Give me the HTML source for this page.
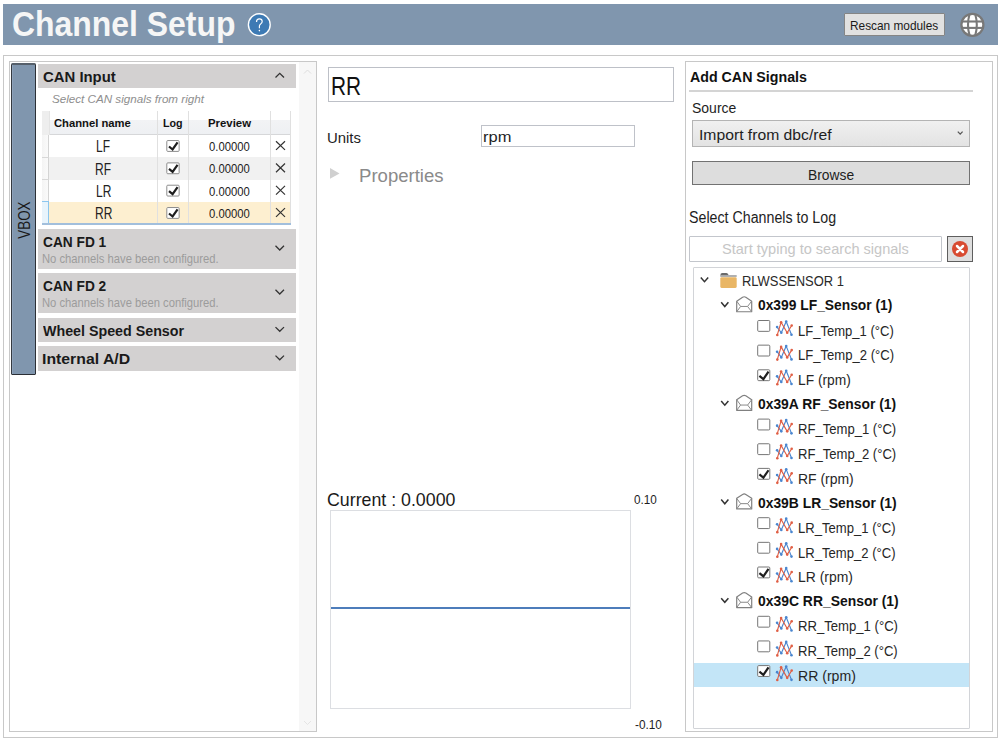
<!DOCTYPE html>
<html><head><meta charset="utf-8">
<style>
*{box-sizing:border-box;margin:0;padding:0}
html,body{width:1000px;height:741px;overflow:hidden;background:#fff;font-family:"Liberation Sans",sans-serif;color:#1e1e1e}
.a{position:absolute}
.t{position:absolute;white-space:nowrap}
svg{position:absolute;overflow:visible}
</style></head><body>
<div class="a" style="left:3px;top:4px;width:995px;height:41px;background:#8096ae"></div>
<svg style="left:0;top:0" width="1000" height="50"><circle cx="259.3" cy="24.7" r="10.9" fill="#3d7ab4" stroke="#fff" stroke-width="1.4"/><path d="M256.5,21.9 C256.5,19.9 257.9,18.9 259.4,18.9 C261,18.9 262.2,20 262.2,21.5 C262.2,23.7 259.4,24.1 259.4,26.1 V28.3" fill="none" stroke="#fff" stroke-width="1.15"/><circle cx="259.4" cy="30.6" r="0.8" fill="#fff"/></svg>
<div class="a" style="left:844px;top:13px;width:100.5px;height:23px;background:#e1e1e1;border:1px solid #858585;border-radius:1px"></div>
<svg style="left:0;top:0" width="1000" height="50"><circle cx="972.4" cy="24.8" r="11" fill="#fff" stroke="#787878" stroke-width="2.3"/><line x1="961" y1="21.5" x2="984" y2="21.5" stroke="#787878" stroke-width="2.1"/><line x1="961" y1="27.9" x2="984" y2="27.9" stroke="#787878" stroke-width="2.1"/><path d="M969.6,14 Q966.4,24.8 969.6,35.6 M975.2,14 Q978.4,24.8 975.2,35.6" fill="none" stroke="#787878" stroke-width="2.1"/></svg>
<div class="a" style="left:3px;top:55px;width:995px;height:683px;border:1px solid #c8c8c8"></div>
<div class="a" style="left:9px;top:61px;width:308px;height:671px;border:1px solid #c8c8c8"></div>
<div class="a" style="left:299px;top:62px;width:17px;height:669px;background:#f7f7f7"></div>
<svg style="left:0;top:0" width="1000" height="741"><polyline points="304,73.5 307.5,70 311,73.5" fill="none" stroke="#dedede" stroke-width="1"/><polyline points="304,721 307.5,724.5 311,721" fill="none" stroke="#e4e4e4" stroke-width="1"/></svg>
<div class="a" style="left:11px;top:63px;width:25px;height:312px;background:#8096ae;border:1px solid #353a41;border-top:2px solid #56606b;border-right-color:#2c3036;border-bottom-color:#2a2e35;border-radius:1.5px;box-shadow:inset 1px 0 0 #8ea2ba"></div>
<div class="a" style="left:38px;top:64px;width:258px;height:24px;background:#d3d1d1"></div>
<div class="a" style="left:38px;top:229px;width:258px;height:40px;background:#d3d1d1"></div>
<div class="a" style="left:38px;top:273px;width:258px;height:40px;background:#d3d1d1"></div>
<div class="a" style="left:38px;top:318px;width:258px;height:24px;background:#d3d1d1"></div>
<div class="a" style="left:38px;top:346px;width:258px;height:25px;background:#d3d1d1"></div>
<svg style="left:0;top:0" width="1000" height="741"><polyline points="275.5,77.5 279.75,73.3 284,77.5" fill="none" stroke="#333" stroke-width="1.3"/><polyline points="275.5,245.8 279.75,250.0 284,245.8" fill="none" stroke="#333" stroke-width="1.3"/><polyline points="275.5,289.79999999999995 279.75,294.0 284,289.79999999999995" fill="none" stroke="#333" stroke-width="1.3"/><polyline points="275.5,327.09999999999997 279.75,331.3 284,327.09999999999997" fill="none" stroke="#333" stroke-width="1.3"/><polyline points="275.5,355.59999999999997 279.75,359.8 284,355.59999999999997" fill="none" stroke="#333" stroke-width="1.3"/></svg>
<div class="a" style="left:42px;top:111px;width:249px;height:24px;background:linear-gradient(#ffffff 0,#ffffff 40%,#f2f3f5 40%,#eef0f3 100%);border-bottom:1px solid #d6d7d9"></div>
<div class="a" style="left:42px;top:111px;width:7px;height:24px;background:#eeeeee"></div>
<div class="a" style="left:42px;top:135px;width:7px;height:89px;background:linear-gradient(to right,#f4f4f4,#fbfbfb)"></div>
<div class="a" style="left:42px;top:202px;width:7px;height:22px;background:#e8f4fc"></div>
<div class="a" style="left:49px;top:135.0px;width:242px;height:22.33px;background:#ffffff"></div>
<div class="a" style="left:49px;top:157.33px;width:242px;height:22.33px;background:#f1f1f1"></div>
<div class="a" style="left:49px;top:179.66px;width:242px;height:22.33px;background:#ffffff"></div>
<div class="a" style="left:49px;top:201.99px;width:242px;height:22.33px;background:#fdefd0"></div>
<div class="a" style="left:157px;top:111px;width:1px;height:113px;background:#e0e0e0"></div>
<div class="a" style="left:188px;top:111px;width:1px;height:113px;background:#e0e0e0"></div>
<div class="a" style="left:270px;top:111px;width:1px;height:113px;background:#e0e0e0"></div>
<div class="a" style="left:290px;top:111px;width:1px;height:113px;background:#e0e0e0"></div>
<div class="a" style="left:49px;top:111px;width:1px;height:24px;background:#e4e4e4"></div>
<div class="a" style="left:48px;top:135px;width:1px;height:67px;background:#d4d4d4"></div>
<div class="a" style="left:42px;top:157px;width:7px;height:1px;background:#d8d8d8"></div>
<div class="a" style="left:42px;top:179px;width:7px;height:1px;background:#d8d8d8"></div>
<div class="a" style="left:42px;top:201px;width:7px;height:1px;background:#8cc6ee"></div>
<div class="a" style="left:48px;top:202px;width:1px;height:22px;background:#8cc6ee"></div>
<div class="a" style="left:42px;top:223.4px;width:249px;height:1.2px;background:#a2bfdc"></div>
<svg style="left:0;top:0" width="1000" height="741"><rect x="166.8" y="140.55" width="12.35" height="10.85" rx="1" fill="#fff" stroke="#8c8c8c" stroke-width="1"/><polyline points="169,146.50 172.6,149.50 177.55,142.45" fill="none" stroke="#1e1e1e" stroke-width="2.2"/><path d="M276,141.20 L285,149.90 M285,141.20 L276,149.90" stroke="#333" stroke-width="1.2"/><rect x="166.8" y="162.88" width="12.35" height="10.85" rx="1" fill="#fff" stroke="#8c8c8c" stroke-width="1"/><polyline points="169,168.83 172.6,171.83 177.55,164.78" fill="none" stroke="#1e1e1e" stroke-width="2.2"/><path d="M276,163.53 L285,172.23 M285,163.53 L276,172.23" stroke="#333" stroke-width="1.2"/><rect x="166.8" y="185.21" width="12.35" height="10.85" rx="1" fill="#fff" stroke="#8c8c8c" stroke-width="1"/><polyline points="169,191.16 172.6,194.16 177.55,187.11" fill="none" stroke="#1e1e1e" stroke-width="2.2"/><path d="M276,185.86 L285,194.56 M285,185.86 L276,194.56" stroke="#333" stroke-width="1.2"/><rect x="166.8" y="207.54" width="12.35" height="10.85" rx="1" fill="#fff" stroke="#8c8c8c" stroke-width="1"/><polyline points="169,213.49 172.6,216.49 177.55,209.44" fill="none" stroke="#1e1e1e" stroke-width="2.2"/><path d="M276,208.19 L285,216.89 M285,208.19 L276,216.89" stroke="#333" stroke-width="1.2"/></svg>
<div class="a" style="left:328px;top:67px;width:346px;height:35px;border:1px solid #bdc0c7"></div>
<div class="a" style="left:481px;top:125px;width:154px;height:22px;border:1px solid #bfc2c9"></div>
<svg style="left:0;top:0" width="1000" height="741"><polygon points="330,168 339.5,173.4 330,178.8" fill="#d0d0d0"/></svg>
<div class="a" style="left:330px;top:509.5px;width:301px;height:199px;border:1.6px solid #dcdee2"></div>
<div class="a" style="left:331px;top:606.8px;width:299px;height:2.2px;background:#4d7dbb"></div>
<div class="a" style="left:685px;top:61px;width:308px;height:671px;border:1px solid #c8c8c8"></div>
<div class="a" style="left:689px;top:90px;width:284px;height:2px;background:#d4d4d4"></div>
<div class="a" style="left:692px;top:120px;width:278px;height:27px;background:linear-gradient(#f0f0f0,#e3e3e3);border:1px solid #b4b4b4"></div>
<svg style="left:0;top:0" width="1000" height="741"><polyline points="957.8,131.6 960.2,134.2 962.6,131.6" fill="none" stroke="#555" stroke-width="1.25"/></svg>
<div class="a" style="left:692px;top:161px;width:278px;height:24px;background:#dddddd;border:1px solid #727272"></div>
<div class="a" style="left:689px;top:236px;width:253px;height:26px;border:1px solid #c3c6cc;border-radius:1px"></div>
<div class="a" style="left:947px;top:236px;width:26px;height:26px;background:#dedede;border:1px solid #5e5e5e"></div>
<svg style="left:0;top:0" width="1000" height="741"><circle cx="960" cy="249" r="8" fill="#d84b31"/><path d="M957,246 L963,252 M963,246 L957,252" stroke="#fff" stroke-width="2.5" stroke-linecap="round"/></svg>
<div class="a" style="left:693px;top:267px;width:277px;height:462px;border:1px solid #d2d4d8;border-radius:1px"></div>
<div class="a" style="left:694px;top:662.8px;width:275px;height:24.3px;background:#c3e5f7"></div>
<svg style="left:0;top:0" width="1000" height="741"><polyline points="700.8,277.60 704.5,281.70 708.2,277.60" fill="none" stroke="#333" stroke-width="1.5"/><path d="M720.3,275.50 q0,-2.4 2,-2.4 h4 q1.2,0 1.8,1.2 l0.5,1.2 z" fill="#6a6a6a"/><rect x="720.3" y="275.10" width="16.4" height="1.8" fill="#a8a8a8"/><rect x="720.3" y="277.30" width="16.4" height="10.6" rx="1.3" fill="#e9b665"/><polyline points="721.2,302.35 724.8,306.55 728.4,302.35" fill="none" stroke="#333" stroke-width="1.5"/><path d="M736.7,301.15 L742.6,297.25 Q744.2,296.25 745.8,297.25 L751.7,301.15 V311.75 H736.7 Z" fill="none" stroke="#808080" stroke-width="1.2" stroke-linejoin="round"/><path d="M736.7,301.15 L740.6,306.45 H747.6 L751.7,301.15 M736.7,311.75 L740.6,306.45 M751.7,311.75 L747.6,306.45" fill="none" stroke="#8a8a8a" stroke-width="1"/><rect x="757.7" y="320.50" width="12.1" height="10.85" rx="1" fill="#fff" stroke="#767676" stroke-width="1"/><polyline points="777.1,327.05 781.3,332.75 786.2,321.45 791.5,334.75" fill="none" stroke="#4a86cf" stroke-width="1.15" stroke-linejoin="round"/><circle cx="777.1" cy="327.05" r="1.3" fill="#4a86cf"/><circle cx="781.3" cy="332.75" r="1.3" fill="#4a86cf"/><circle cx="786.2" cy="321.45" r="1.3" fill="#4a86cf"/><circle cx="791.5" cy="334.75" r="1.3" fill="#4a86cf"/><polyline points="777.3,334.95 781.1,322.25 787.2,332.75 791.7,325.45" fill="none" stroke="#e05f45" stroke-width="1.15" stroke-linejoin="round"/><circle cx="777.3" cy="334.95" r="1.3" fill="#e05f45"/><circle cx="781.1" cy="322.25" r="1.3" fill="#e05f45"/><circle cx="787.2" cy="332.75" r="1.3" fill="#e05f45"/><circle cx="791.7" cy="325.45" r="1.3" fill="#e05f45"/><rect x="757.7" y="345.15" width="12.1" height="10.85" rx="1" fill="#fff" stroke="#767676" stroke-width="1"/><polyline points="777.1,351.70 781.3,357.40 786.2,346.10 791.5,359.40" fill="none" stroke="#4a86cf" stroke-width="1.15" stroke-linejoin="round"/><circle cx="777.1" cy="351.70" r="1.3" fill="#4a86cf"/><circle cx="781.3" cy="357.40" r="1.3" fill="#4a86cf"/><circle cx="786.2" cy="346.10" r="1.3" fill="#4a86cf"/><circle cx="791.5" cy="359.40" r="1.3" fill="#4a86cf"/><polyline points="777.3,359.60 781.1,346.90 787.2,357.40 791.7,350.10" fill="none" stroke="#e05f45" stroke-width="1.15" stroke-linejoin="round"/><circle cx="777.3" cy="359.60" r="1.3" fill="#e05f45"/><circle cx="781.1" cy="346.90" r="1.3" fill="#e05f45"/><circle cx="787.2" cy="357.40" r="1.3" fill="#e05f45"/><circle cx="791.7" cy="350.10" r="1.3" fill="#e05f45"/><rect x="757.7" y="369.80" width="12.1" height="10.85" rx="1" fill="#fff" stroke="#767676" stroke-width="1"/><polyline points="759.4,375.85 763.4,379.10 768.5,371.65" fill="none" stroke="#1e1e1e" stroke-width="2.2"/><polyline points="777.1,376.35 781.3,382.05 786.2,370.75 791.5,384.05" fill="none" stroke="#4a86cf" stroke-width="1.15" stroke-linejoin="round"/><circle cx="777.1" cy="376.35" r="1.3" fill="#4a86cf"/><circle cx="781.3" cy="382.05" r="1.3" fill="#4a86cf"/><circle cx="786.2" cy="370.75" r="1.3" fill="#4a86cf"/><circle cx="791.5" cy="384.05" r="1.3" fill="#4a86cf"/><polyline points="777.3,384.25 781.1,371.55 787.2,382.05 791.7,374.75" fill="none" stroke="#e05f45" stroke-width="1.15" stroke-linejoin="round"/><circle cx="777.3" cy="384.25" r="1.3" fill="#e05f45"/><circle cx="781.1" cy="371.55" r="1.3" fill="#e05f45"/><circle cx="787.2" cy="382.05" r="1.3" fill="#e05f45"/><circle cx="791.7" cy="374.75" r="1.3" fill="#e05f45"/><polyline points="721.2,400.95 724.8,405.15 728.4,400.95" fill="none" stroke="#333" stroke-width="1.5"/><path d="M736.7,399.75 L742.6,395.85 Q744.2,394.85 745.8,395.85 L751.7,399.75 V410.35 H736.7 Z" fill="none" stroke="#808080" stroke-width="1.2" stroke-linejoin="round"/><path d="M736.7,399.75 L740.6,405.05 H747.6 L751.7,399.75 M736.7,410.35 L740.6,405.05 M751.7,410.35 L747.6,405.05" fill="none" stroke="#8a8a8a" stroke-width="1"/><rect x="757.7" y="419.10" width="12.1" height="10.85" rx="1" fill="#fff" stroke="#767676" stroke-width="1"/><polyline points="777.1,425.65 781.3,431.35 786.2,420.05 791.5,433.35" fill="none" stroke="#4a86cf" stroke-width="1.15" stroke-linejoin="round"/><circle cx="777.1" cy="425.65" r="1.3" fill="#4a86cf"/><circle cx="781.3" cy="431.35" r="1.3" fill="#4a86cf"/><circle cx="786.2" cy="420.05" r="1.3" fill="#4a86cf"/><circle cx="791.5" cy="433.35" r="1.3" fill="#4a86cf"/><polyline points="777.3,433.55 781.1,420.85 787.2,431.35 791.7,424.05" fill="none" stroke="#e05f45" stroke-width="1.15" stroke-linejoin="round"/><circle cx="777.3" cy="433.55" r="1.3" fill="#e05f45"/><circle cx="781.1" cy="420.85" r="1.3" fill="#e05f45"/><circle cx="787.2" cy="431.35" r="1.3" fill="#e05f45"/><circle cx="791.7" cy="424.05" r="1.3" fill="#e05f45"/><rect x="757.7" y="443.75" width="12.1" height="10.85" rx="1" fill="#fff" stroke="#767676" stroke-width="1"/><polyline points="777.1,450.30 781.3,456.00 786.2,444.70 791.5,458.00" fill="none" stroke="#4a86cf" stroke-width="1.15" stroke-linejoin="round"/><circle cx="777.1" cy="450.30" r="1.3" fill="#4a86cf"/><circle cx="781.3" cy="456.00" r="1.3" fill="#4a86cf"/><circle cx="786.2" cy="444.70" r="1.3" fill="#4a86cf"/><circle cx="791.5" cy="458.00" r="1.3" fill="#4a86cf"/><polyline points="777.3,458.20 781.1,445.50 787.2,456.00 791.7,448.70" fill="none" stroke="#e05f45" stroke-width="1.15" stroke-linejoin="round"/><circle cx="777.3" cy="458.20" r="1.3" fill="#e05f45"/><circle cx="781.1" cy="445.50" r="1.3" fill="#e05f45"/><circle cx="787.2" cy="456.00" r="1.3" fill="#e05f45"/><circle cx="791.7" cy="448.70" r="1.3" fill="#e05f45"/><rect x="757.7" y="468.40" width="12.1" height="10.85" rx="1" fill="#fff" stroke="#767676" stroke-width="1"/><polyline points="759.4,474.45 763.4,477.70 768.5,470.25" fill="none" stroke="#1e1e1e" stroke-width="2.2"/><polyline points="777.1,474.95 781.3,480.65 786.2,469.35 791.5,482.65" fill="none" stroke="#4a86cf" stroke-width="1.15" stroke-linejoin="round"/><circle cx="777.1" cy="474.95" r="1.3" fill="#4a86cf"/><circle cx="781.3" cy="480.65" r="1.3" fill="#4a86cf"/><circle cx="786.2" cy="469.35" r="1.3" fill="#4a86cf"/><circle cx="791.5" cy="482.65" r="1.3" fill="#4a86cf"/><polyline points="777.3,482.85 781.1,470.15 787.2,480.65 791.7,473.35" fill="none" stroke="#e05f45" stroke-width="1.15" stroke-linejoin="round"/><circle cx="777.3" cy="482.85" r="1.3" fill="#e05f45"/><circle cx="781.1" cy="470.15" r="1.3" fill="#e05f45"/><circle cx="787.2" cy="480.65" r="1.3" fill="#e05f45"/><circle cx="791.7" cy="473.35" r="1.3" fill="#e05f45"/><polyline points="721.2,499.55 724.8,503.75 728.4,499.55" fill="none" stroke="#333" stroke-width="1.5"/><path d="M736.7,498.35 L742.6,494.45 Q744.2,493.45 745.8,494.45 L751.7,498.35 V508.95 H736.7 Z" fill="none" stroke="#808080" stroke-width="1.2" stroke-linejoin="round"/><path d="M736.7,498.35 L740.6,503.65 H747.6 L751.7,498.35 M736.7,508.95 L740.6,503.65 M751.7,508.95 L747.6,503.65" fill="none" stroke="#8a8a8a" stroke-width="1"/><rect x="757.7" y="517.70" width="12.1" height="10.85" rx="1" fill="#fff" stroke="#767676" stroke-width="1"/><polyline points="777.1,524.25 781.3,529.95 786.2,518.65 791.5,531.95" fill="none" stroke="#4a86cf" stroke-width="1.15" stroke-linejoin="round"/><circle cx="777.1" cy="524.25" r="1.3" fill="#4a86cf"/><circle cx="781.3" cy="529.95" r="1.3" fill="#4a86cf"/><circle cx="786.2" cy="518.65" r="1.3" fill="#4a86cf"/><circle cx="791.5" cy="531.95" r="1.3" fill="#4a86cf"/><polyline points="777.3,532.15 781.1,519.45 787.2,529.95 791.7,522.65" fill="none" stroke="#e05f45" stroke-width="1.15" stroke-linejoin="round"/><circle cx="777.3" cy="532.15" r="1.3" fill="#e05f45"/><circle cx="781.1" cy="519.45" r="1.3" fill="#e05f45"/><circle cx="787.2" cy="529.95" r="1.3" fill="#e05f45"/><circle cx="791.7" cy="522.65" r="1.3" fill="#e05f45"/><rect x="757.7" y="542.35" width="12.1" height="10.85" rx="1" fill="#fff" stroke="#767676" stroke-width="1"/><polyline points="777.1,548.90 781.3,554.60 786.2,543.30 791.5,556.60" fill="none" stroke="#4a86cf" stroke-width="1.15" stroke-linejoin="round"/><circle cx="777.1" cy="548.90" r="1.3" fill="#4a86cf"/><circle cx="781.3" cy="554.60" r="1.3" fill="#4a86cf"/><circle cx="786.2" cy="543.30" r="1.3" fill="#4a86cf"/><circle cx="791.5" cy="556.60" r="1.3" fill="#4a86cf"/><polyline points="777.3,556.80 781.1,544.10 787.2,554.60 791.7,547.30" fill="none" stroke="#e05f45" stroke-width="1.15" stroke-linejoin="round"/><circle cx="777.3" cy="556.80" r="1.3" fill="#e05f45"/><circle cx="781.1" cy="544.10" r="1.3" fill="#e05f45"/><circle cx="787.2" cy="554.60" r="1.3" fill="#e05f45"/><circle cx="791.7" cy="547.30" r="1.3" fill="#e05f45"/><rect x="757.7" y="567.00" width="12.1" height="10.85" rx="1" fill="#fff" stroke="#767676" stroke-width="1"/><polyline points="759.4,573.05 763.4,576.30 768.5,568.85" fill="none" stroke="#1e1e1e" stroke-width="2.2"/><polyline points="777.1,573.55 781.3,579.25 786.2,567.95 791.5,581.25" fill="none" stroke="#4a86cf" stroke-width="1.15" stroke-linejoin="round"/><circle cx="777.1" cy="573.55" r="1.3" fill="#4a86cf"/><circle cx="781.3" cy="579.25" r="1.3" fill="#4a86cf"/><circle cx="786.2" cy="567.95" r="1.3" fill="#4a86cf"/><circle cx="791.5" cy="581.25" r="1.3" fill="#4a86cf"/><polyline points="777.3,581.45 781.1,568.75 787.2,579.25 791.7,571.95" fill="none" stroke="#e05f45" stroke-width="1.15" stroke-linejoin="round"/><circle cx="777.3" cy="581.45" r="1.3" fill="#e05f45"/><circle cx="781.1" cy="568.75" r="1.3" fill="#e05f45"/><circle cx="787.2" cy="579.25" r="1.3" fill="#e05f45"/><circle cx="791.7" cy="571.95" r="1.3" fill="#e05f45"/><polyline points="721.2,598.15 724.8,602.35 728.4,598.15" fill="none" stroke="#333" stroke-width="1.5"/><path d="M736.7,596.95 L742.6,593.05 Q744.2,592.05 745.8,593.05 L751.7,596.95 V607.55 H736.7 Z" fill="none" stroke="#808080" stroke-width="1.2" stroke-linejoin="round"/><path d="M736.7,596.95 L740.6,602.25 H747.6 L751.7,596.95 M736.7,607.55 L740.6,602.25 M751.7,607.55 L747.6,602.25" fill="none" stroke="#8a8a8a" stroke-width="1"/><rect x="757.7" y="616.30" width="12.1" height="10.85" rx="1" fill="#fff" stroke="#767676" stroke-width="1"/><polyline points="777.1,622.85 781.3,628.55 786.2,617.25 791.5,630.55" fill="none" stroke="#4a86cf" stroke-width="1.15" stroke-linejoin="round"/><circle cx="777.1" cy="622.85" r="1.3" fill="#4a86cf"/><circle cx="781.3" cy="628.55" r="1.3" fill="#4a86cf"/><circle cx="786.2" cy="617.25" r="1.3" fill="#4a86cf"/><circle cx="791.5" cy="630.55" r="1.3" fill="#4a86cf"/><polyline points="777.3,630.75 781.1,618.05 787.2,628.55 791.7,621.25" fill="none" stroke="#e05f45" stroke-width="1.15" stroke-linejoin="round"/><circle cx="777.3" cy="630.75" r="1.3" fill="#e05f45"/><circle cx="781.1" cy="618.05" r="1.3" fill="#e05f45"/><circle cx="787.2" cy="628.55" r="1.3" fill="#e05f45"/><circle cx="791.7" cy="621.25" r="1.3" fill="#e05f45"/><rect x="757.7" y="640.95" width="12.1" height="10.85" rx="1" fill="#fff" stroke="#767676" stroke-width="1"/><polyline points="777.1,647.50 781.3,653.20 786.2,641.90 791.5,655.20" fill="none" stroke="#4a86cf" stroke-width="1.15" stroke-linejoin="round"/><circle cx="777.1" cy="647.50" r="1.3" fill="#4a86cf"/><circle cx="781.3" cy="653.20" r="1.3" fill="#4a86cf"/><circle cx="786.2" cy="641.90" r="1.3" fill="#4a86cf"/><circle cx="791.5" cy="655.20" r="1.3" fill="#4a86cf"/><polyline points="777.3,655.40 781.1,642.70 787.2,653.20 791.7,645.90" fill="none" stroke="#e05f45" stroke-width="1.15" stroke-linejoin="round"/><circle cx="777.3" cy="655.40" r="1.3" fill="#e05f45"/><circle cx="781.1" cy="642.70" r="1.3" fill="#e05f45"/><circle cx="787.2" cy="653.20" r="1.3" fill="#e05f45"/><circle cx="791.7" cy="645.90" r="1.3" fill="#e05f45"/><rect x="757.7" y="665.60" width="12.1" height="10.85" rx="1" fill="#fff" stroke="#767676" stroke-width="1"/><polyline points="759.4,671.65 763.4,674.90 768.5,667.45" fill="none" stroke="#1e1e1e" stroke-width="2.2"/><polyline points="777.1,672.15 781.3,677.85 786.2,666.55 791.5,679.85" fill="none" stroke="#4a86cf" stroke-width="1.15" stroke-linejoin="round"/><circle cx="777.1" cy="672.15" r="1.3" fill="#4a86cf"/><circle cx="781.3" cy="677.85" r="1.3" fill="#4a86cf"/><circle cx="786.2" cy="666.55" r="1.3" fill="#4a86cf"/><circle cx="791.5" cy="679.85" r="1.3" fill="#4a86cf"/><polyline points="777.3,680.05 781.1,667.35 787.2,677.85 791.7,670.55" fill="none" stroke="#e05f45" stroke-width="1.15" stroke-linejoin="round"/><circle cx="777.3" cy="680.05" r="1.3" fill="#e05f45"/><circle cx="781.1" cy="667.35" r="1.3" fill="#e05f45"/><circle cx="787.2" cy="677.85" r="1.3" fill="#e05f45"/><circle cx="791.7" cy="670.55" r="1.3" fill="#e05f45"/></svg>
<div class="t" style="left:11.88px;top:6.91px;font-family:'Liberation Sans',sans-serif;font-size:34.593px;line-height:34.593px;font-weight:bold;font-style:normal;color:#f6f6f6;transform:scale(0.9233,1.0000);transform-origin:0 29.29px;">Channel Setup</div>
<div class="t" style="left:850.09px;top:19.29px;font-family:'Liberation Sans',sans-serif;font-size:13.000px;line-height:13.000px;font-weight:normal;font-style:normal;color:#1a1a1a;transform:scale(0.9115,1.0000);transform-origin:0 11.01px;">Rescan modules</div>
<div class="t" style="left:42.50px;top:69.10px;font-family:'Liberation Sans',sans-serif;font-size:15.116px;line-height:15.116px;font-weight:bold;font-style:normal;color:#1a1a1a;transform:scale(0.9851,1.0000);transform-origin:0 12.80px;">CAN Input</div>
<div class="t" style="left:52.40px;top:92.65px;font-family:'Liberation Sans',sans-serif;font-size:11.628px;line-height:11.628px;font-weight:normal;font-style:italic;color:#8e8e8e;transform:scale(1.0020,1.0000);transform-origin:0 9.85px;">Select CAN signals from right</div>
<div class="t" style="left:54.40px;top:118.18px;font-family:'Liberation Sans',sans-serif;font-size:11.483px;line-height:11.483px;font-weight:bold;font-style:normal;color:#111;transform:scale(0.9795,1.0000);transform-origin:0 9.72px;">Channel name</div>
<div class="t" style="left:162.70px;top:118.18px;font-family:'Liberation Sans',sans-serif;font-size:11.483px;line-height:11.483px;font-weight:bold;font-style:normal;color:#111;transform:scale(0.9333,1.0000);transform-origin:0 9.72px;">Log</div>
<div class="t" style="left:207.90px;top:118.18px;font-family:'Liberation Sans',sans-serif;font-size:11.483px;line-height:11.483px;font-weight:bold;font-style:normal;color:#111;transform:scale(0.9932,1.0000);transform-origin:0 9.72px;">Preview</div>
<div class="t" style="left:96.04px;top:139.41px;font-family:'Liberation Sans',sans-serif;font-size:15.698px;line-height:15.698px;font-weight:normal;font-style:normal;color:#222;transform:scale(0.7647,1.0000);transform-origin:0 13.29px;">LF</div>
<div class="t" style="left:208.90px;top:140.90px;font-family:'Liberation Sans',sans-serif;font-size:12.407px;line-height:12.407px;font-weight:normal;font-style:normal;color:#222;transform:scale(0.9111,1.0000);transform-origin:0 10.50px;">0.00000</div>
<div class="t" style="left:94.89px;top:161.74px;font-family:'Liberation Sans',sans-serif;font-size:15.698px;line-height:15.698px;font-weight:normal;font-style:normal;color:#222;transform:scale(0.7647,1.0000);transform-origin:0 13.29px;">RF</div>
<div class="t" style="left:208.90px;top:163.23px;font-family:'Liberation Sans',sans-serif;font-size:12.407px;line-height:12.407px;font-weight:normal;font-style:normal;color:#222;transform:scale(0.9111,1.0000);transform-origin:0 10.50px;">0.00000</div>
<div class="t" style="left:95.65px;top:184.07px;font-family:'Liberation Sans',sans-serif;font-size:15.698px;line-height:15.698px;font-weight:normal;font-style:normal;color:#222;transform:scale(0.7647,1.0000);transform-origin:0 13.29px;">LR</div>
<div class="t" style="left:208.90px;top:185.56px;font-family:'Liberation Sans',sans-serif;font-size:12.407px;line-height:12.407px;font-weight:normal;font-style:normal;color:#222;transform:scale(0.9111,1.0000);transform-origin:0 10.50px;">0.00000</div>
<div class="t" style="left:94.51px;top:206.40px;font-family:'Liberation Sans',sans-serif;font-size:15.698px;line-height:15.698px;font-weight:normal;font-style:normal;color:#222;transform:scale(0.7647,1.0000);transform-origin:0 13.29px;">RR</div>
<div class="t" style="left:208.90px;top:207.89px;font-family:'Liberation Sans',sans-serif;font-size:12.407px;line-height:12.407px;font-weight:normal;font-style:normal;color:#222;transform:scale(0.9111,1.0000);transform-origin:0 10.50px;">0.00000</div>
<div class="t" style="left:43.00px;top:234.03px;font-family:'Liberation Sans',sans-serif;font-size:15.552px;line-height:15.552px;font-weight:bold;font-style:normal;color:#1a1a1a;transform:scale(0.8819,1.0000);transform-origin:0 13.17px;">CAN FD 1</div>
<div class="t" style="left:41.96px;top:253.81px;font-family:'Liberation Sans',sans-serif;font-size:11.919px;line-height:11.919px;font-weight:normal;font-style:normal;color:#9c9c9c;transform:scale(0.9430,1.0000);transform-origin:0 10.09px;">No channels have been configured.</div>
<div class="t" style="left:43.00px;top:278.43px;font-family:'Liberation Sans',sans-serif;font-size:15.552px;line-height:15.552px;font-weight:bold;font-style:normal;color:#1a1a1a;transform:scale(0.8819,1.0000);transform-origin:0 13.17px;">CAN FD 2</div>
<div class="t" style="left:41.96px;top:298.11px;font-family:'Liberation Sans',sans-serif;font-size:11.919px;line-height:11.919px;font-weight:normal;font-style:normal;color:#9c9c9c;transform:scale(0.9430,1.0000);transform-origin:0 10.09px;">No channels have been configured.</div>
<div class="t" style="left:42.90px;top:322.98px;font-family:'Liberation Sans',sans-serif;font-size:15.262px;line-height:15.262px;font-weight:bold;font-style:normal;color:#1a1a1a;transform:scale(0.9351,1.0000);transform-origin:0 12.92px;">Wheel Speed Sensor</div>
<div class="t" style="left:41.88px;top:351.33px;font-family:'Liberation Sans',sans-serif;font-size:15.552px;line-height:15.552px;font-weight:bold;font-style:normal;color:#1a1a1a;transform:scale(1.0165,1.0000);transform-origin:0 13.17px;">Internal A/D</div>
<div class="t" style="left:29.70px;top:224.54px;font-family:'Liberation Sans',sans-serif;font-size:16.134px;line-height:16.134px;font-weight:normal;font-style:normal;color:#1a1a1a;transform:rotate(-90deg) scale(0.8289,1.0000);transform-origin:0 13.66px;">VBOX</div>
<div class="t" style="left:330.88px;top:73.62px;font-family:'Liberation Sans',sans-serif;font-size:25.727px;line-height:25.727px;font-weight:normal;font-style:normal;color:#111;transform:scale(0.8118,1.0000);transform-origin:0 21.78px;">RR</div>
<div class="t" style="left:326.52px;top:129.83px;font-family:'Liberation Sans',sans-serif;font-size:15.262px;line-height:15.262px;font-weight:normal;font-style:normal;color:#1e1e1e;transform:scale(0.9773,1.0000);transform-origin:0 12.92px;">Units</div>
<div class="t" style="left:483.29px;top:129.96px;font-family:'Liberation Sans',sans-serif;font-size:14.867px;line-height:14.867px;font-weight:normal;font-style:normal;color:#1e1e1e;transform:scale(1.1083,1.0000);transform-origin:0 12.59px;">rpm</div>
<div class="t" style="left:359.00px;top:166.71px;font-family:'Liberation Sans',sans-serif;font-size:18.532px;line-height:18.532px;font-weight:normal;font-style:normal;color:#8a8a8a;transform:scale(1.0024,1.0000);transform-origin:0 15.69px;">Properties</div>
<div class="t" style="left:326.83px;top:490.79px;font-family:'Liberation Sans',sans-serif;font-size:18.314px;line-height:18.314px;font-weight:normal;font-style:normal;color:#1a1a1a;transform:scale(0.9710,1.0000);transform-origin:0 15.51px;">Current : 0.0000</div>
<div class="t" style="left:634.10px;top:493.66px;font-family:'Liberation Sans',sans-serif;font-size:12.689px;line-height:12.689px;font-weight:normal;font-style:normal;color:#1e1e1e;transform:scale(0.9250,1.0000);transform-origin:0 10.74px;">0.10</div>
<div class="t" style="left:634.90px;top:718.78px;font-family:'Liberation Sans',sans-serif;font-size:12.548px;line-height:12.548px;font-weight:normal;font-style:normal;color:#1e1e1e;transform:scale(0.9429,1.0000);transform-origin:0 10.62px;">-0.10</div>
<div class="t" style="left:689.50px;top:68.83px;font-family:'Liberation Sans',sans-serif;font-size:15.552px;line-height:15.552px;font-weight:bold;font-style:normal;color:#111;transform:scale(0.9148,1.0000);transform-origin:0 13.17px;">Add CAN Signals</div>
<div class="t" style="left:692.07px;top:100.10px;font-family:'Liberation Sans',sans-serif;font-size:15.116px;line-height:15.116px;font-weight:normal;font-style:normal;color:#1e1e1e;transform:scale(0.9255,1.0000);transform-origin:0 12.80px;">Source</div>
<div class="t" style="left:698.59px;top:127.23px;font-family:'Liberation Sans',sans-serif;font-size:15.552px;line-height:15.552px;font-weight:normal;font-style:normal;color:#1e1e1e;transform:scale(1.0099,1.0000);transform-origin:0 13.17px;">Import from dbc/ref</div>
<div class="t" style="left:808.11px;top:166.93px;font-family:'Liberation Sans',sans-serif;font-size:15.552px;line-height:15.552px;font-weight:normal;font-style:normal;color:#1e1e1e;transform:scale(0.8902,1.0000);transform-origin:0 13.17px;">Browse</div>
<div class="t" style="left:688.80px;top:209.69px;font-family:'Liberation Sans',sans-serif;font-size:15.843px;line-height:15.843px;font-weight:normal;font-style:normal;color:#1e1e1e;transform:scale(0.8988,1.0000);transform-origin:0 13.41px;">Select Channels to Log</div>
<div class="t" style="left:721.74px;top:241.00px;font-family:'Liberation Sans',sans-serif;font-size:15.116px;line-height:15.116px;font-weight:normal;font-style:normal;color:#c6c6c6;transform:scale(0.9632,1.0000);transform-origin:0 12.80px;">Start typing to search signals</div>
<div class="t" style="left:741.79px;top:273.62px;font-family:'Liberation Sans',sans-serif;font-size:14.971px;line-height:14.971px;font-weight:normal;font-style:normal;color:#2a2a2a;transform:scale(0.8650,1.0000);transform-origin:0 12.68px;">RLWSSENSOR 1</div>
<div class="t" style="left:757.80px;top:298.40px;font-family:'Liberation Sans',sans-serif;font-size:14.826px;line-height:14.826px;font-weight:bold;font-style:normal;color:#111;transform:scale(0.9326,1.0000);transform-origin:0 12.55px;">0x399 LF_Sensor (1)</div>
<div class="t" style="left:797.65px;top:322.68px;font-family:'Liberation Sans',sans-serif;font-size:15.262px;line-height:15.262px;font-weight:normal;font-style:normal;color:#262626;transform:scale(0.8545,1.0000);transform-origin:0 12.92px;">LF_Temp_1 (°C)</div>
<div class="t" style="left:797.64px;top:347.33px;font-family:'Liberation Sans',sans-serif;font-size:15.262px;line-height:15.262px;font-weight:normal;font-style:normal;color:#262626;transform:scale(0.8573,1.0000);transform-origin:0 12.92px;">LF_Temp_2 (°C)</div>
<div class="t" style="left:797.60px;top:371.98px;font-family:'Liberation Sans',sans-serif;font-size:15.262px;line-height:15.262px;font-weight:normal;font-style:normal;color:#262626;transform:scale(0.9035,1.0000);transform-origin:0 12.92px;">LF (rpm)</div>
<div class="t" style="left:757.80px;top:397.00px;font-family:'Liberation Sans',sans-serif;font-size:14.826px;line-height:14.826px;font-weight:bold;font-style:normal;color:#111;transform:scale(0.9357,1.0000);transform-origin:0 12.55px;">0x39A RF_Sensor (1)</div>
<div class="t" style="left:797.64px;top:421.28px;font-family:'Liberation Sans',sans-serif;font-size:15.262px;line-height:15.262px;font-weight:normal;font-style:normal;color:#262626;transform:scale(0.8573,1.0000);transform-origin:0 12.92px;">RF_Temp_1 (°C)</div>
<div class="t" style="left:797.64px;top:445.93px;font-family:'Liberation Sans',sans-serif;font-size:15.262px;line-height:15.262px;font-weight:normal;font-style:normal;color:#262626;transform:scale(0.8573,1.0000);transform-origin:0 12.92px;">RF_Temp_2 (°C)</div>
<div class="t" style="left:797.59px;top:470.58px;font-family:'Liberation Sans',sans-serif;font-size:15.262px;line-height:15.262px;font-weight:normal;font-style:normal;color:#262626;transform:scale(0.9132,1.0000);transform-origin:0 12.92px;">RF (rpm)</div>
<div class="t" style="left:757.80px;top:495.60px;font-family:'Liberation Sans',sans-serif;font-size:14.826px;line-height:14.826px;font-weight:bold;font-style:normal;color:#111;transform:scale(0.9357,1.0000);transform-origin:0 12.55px;">0x39B LR_Sensor (1)</div>
<div class="t" style="left:797.64px;top:519.88px;font-family:'Liberation Sans',sans-serif;font-size:15.262px;line-height:15.262px;font-weight:normal;font-style:normal;color:#262626;transform:scale(0.8573,1.0000);transform-origin:0 12.92px;">LR_Temp_1 (°C)</div>
<div class="t" style="left:797.64px;top:544.53px;font-family:'Liberation Sans',sans-serif;font-size:15.262px;line-height:15.262px;font-weight:normal;font-style:normal;color:#262626;transform:scale(0.8573,1.0000);transform-origin:0 12.92px;">LR_Temp_2 (°C)</div>
<div class="t" style="left:797.59px;top:569.18px;font-family:'Liberation Sans',sans-serif;font-size:15.262px;line-height:15.262px;font-weight:normal;font-style:normal;color:#262626;transform:scale(0.9132,1.0000);transform-origin:0 12.92px;">LR (rpm)</div>
<div class="t" style="left:757.80px;top:594.20px;font-family:'Liberation Sans',sans-serif;font-size:14.826px;line-height:14.826px;font-weight:bold;font-style:normal;color:#111;transform:scale(0.9387,1.0000);transform-origin:0 12.55px;">0x39C RR_Sensor (1)</div>
<div class="t" style="left:797.64px;top:618.48px;font-family:'Liberation Sans',sans-serif;font-size:15.262px;line-height:15.262px;font-weight:normal;font-style:normal;color:#262626;transform:scale(0.8600,1.0000);transform-origin:0 12.92px;">RR_Temp_1 (°C)</div>
<div class="t" style="left:797.64px;top:643.13px;font-family:'Liberation Sans',sans-serif;font-size:15.262px;line-height:15.262px;font-weight:normal;font-style:normal;color:#262626;transform:scale(0.8573,1.0000);transform-origin:0 12.92px;">RR_Temp_2 (°C)</div>
<div class="t" style="left:797.58px;top:667.78px;font-family:'Liberation Sans',sans-serif;font-size:15.262px;line-height:15.262px;font-weight:normal;font-style:normal;color:#262626;transform:scale(0.9230,1.0000);transform-origin:0 12.92px;">RR (rpm)</div>
</body></html>
